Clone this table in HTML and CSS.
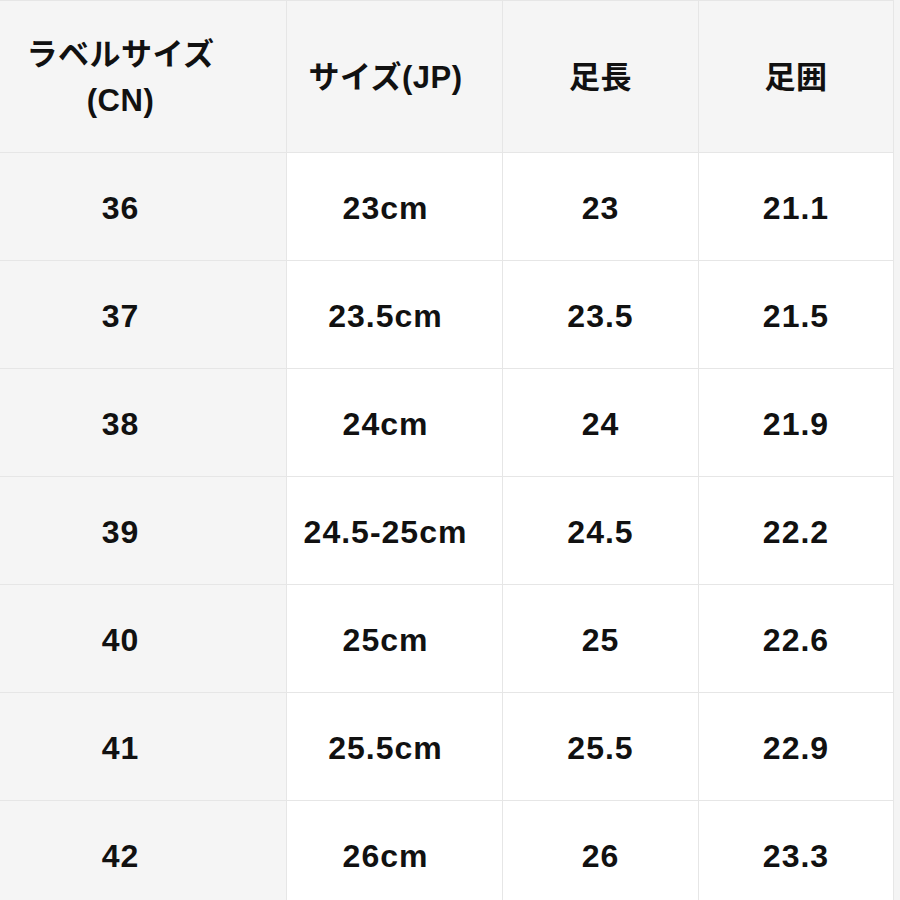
FILE: index.html
```html
<!DOCTYPE html>
<html lang="ja">
<head>
<meta charset="utf-8">
<title>サイズ表</title>
<link rel="stylesheet" href="styles.css">
</head>
<body>
<table class="size-table">
  <colgroup>
    <col class="c1"><col class="c2"><col class="c3"><col class="c4">
  </colgroup>
  <thead>
    <tr>
      <th class="label">ラベルサイズ<br>(CN)</th>
      <th class="jp">サイズ(JP)</th>
      <th>足長</th>
      <th>足囲</th>
    </tr>
  </thead>
  <tbody>
    <tr><td class="label">36</td><td class="jp">23cm</td><td>23</td><td>21.1</td></tr>
    <tr><td class="label">37</td><td class="jp">23.5cm</td><td>23.5</td><td>21.5</td></tr>
    <tr><td class="label">38</td><td class="jp">24cm</td><td>24</td><td>21.9</td></tr>
    <tr><td class="label">39</td><td class="jp">24.5-25cm</td><td>24.5</td><td>22.2</td></tr>
    <tr><td class="label">40</td><td class="jp">25cm</td><td>25</td><td>22.6</td></tr>
    <tr><td class="label">41</td><td class="jp">25.5cm</td><td>25.5</td><td>22.9</td></tr>
    <tr><td class="label">42</td><td class="jp">26cm</td><td>26</td><td>23.3</td></tr>
  </tbody>
</table>
</body>
</html>
```
FILE: styles.css
```css
html, body {
  margin: 0;
  padding: 0;
  height: 900px;
  overflow: hidden;
  background: #f4f4f4;
}

.size-table {
  border-collapse: separate;
  border-spacing: 0;
  table-layout: fixed;
  width: 894px;
  border-top: 1px solid #e6e6e6;
  font-family: "Liberation Sans", "Noto Sans CJK JP", sans-serif;
  color: #111;
  background: #fff;
}

.c1 { width: 287px; }
.c2 { width: 216px; }
.c3 { width: 196px; }
.c4 { width: 195px; }

.size-table th,
.size-table td {
  box-sizing: border-box;
  border-right: 1px solid #e6e6e6;
  border-bottom: 1px solid #e6e6e6;
  text-align: center;
  vertical-align: middle;
  padding: 3px 0 0 0;
}

.size-table th {
  height: 152px;
  background: #f5f5f5;
  font-size: 31px;
  font-weight: 700;
  line-height: 46px;
  letter-spacing: 0.5px;
}

.size-table td {
  height: 108px;
  font-size: 32px;
  font-weight: 700;
  letter-spacing: 1px;
}

.size-table .label {
  background: #f5f5f5;
  padding-right: 45px;
}

.size-table .jp {
  padding-right: 18px;
}
```
